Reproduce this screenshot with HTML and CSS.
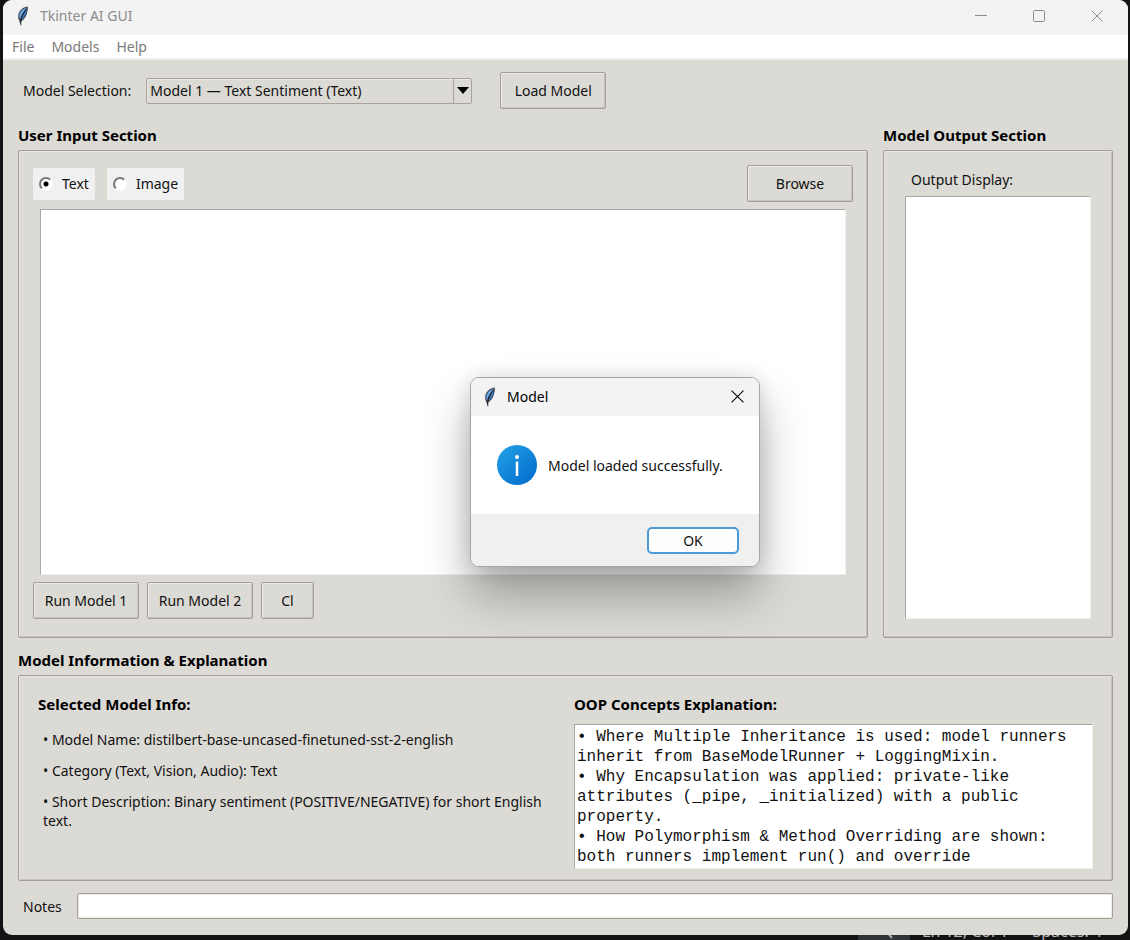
FILE: index.html
```html
<!DOCTYPE html>
<html lang="en">
<head>
<meta charset="utf-8">
<title>Tkinter AI GUI</title>
<link rel="stylesheet" href="styles.css">
</head>
<body class="desktop">
<svg class="defs" aria-hidden="true">
  <defs>
    <symbol id="feather" viewBox="0 0 12 20">
      <path d="M10.6 .6C7 .9 3.2 3.6 1.8 7.4.9 9.8.9 12.8 2.2 14.6L3.6 19.4 4.4 19.2 4.2 15.4C7.2 13.6 9.4 10.4 10 7 10.4 4.8 11.4 2.6 10.6.6Z" fill="#3a424d"/>
      <path d="M9.8 1.6C6.6 2.6 3.6 5.200 2.600 8.400 2.200 10 2.200 12 3 13.400 4 9.600 6 6 9.800 1.600Z" fill="#6fabeb"/>
      <path d="M9.900 2.800C7.200 7 5.200 10.400 4.200 14 6.600 12.400 8.600 9.600 9.200 6.400Z" fill="#3a74bf"/>
      <path d="M9 3.400C6.200 7 4.200 10.800 3.500 17" fill="none" stroke="#111820" stroke-width=".8"/>
      <path d="M1 9.500C1.300 6.500 3.200 3.600 6 2" fill="none" stroke="#98a2ae" stroke-width=".8"/>
    </symbol>
    <symbol id="cross" viewBox="0 0 12 12">
      <path d="M.5.5 11.5 11.5M11.5.5.5 11.5" fill="none" stroke="currentColor"/>
    </symbol>
  </defs>
</svg>

<footer class="statusbar">
  <span class="statusbar-tile"><svg width="20" height="20" viewBox="0 0 20 20"><circle cx="8" cy="7" r="6" fill="none" stroke="#a5a8ac" stroke-width="2"/><path d="M12 11 18 18" stroke="#a5a8ac" stroke-width="2"/></svg></span>
  <span>Ln 12, Col 1</span>
  <span>Spaces: 4</span>
</footer>

<main class="window">
  <header class="titlebar">
    <svg class="feather"><use href="#feather"/></svg>
    <span class="title">Tkinter AI GUI</span>
    <div class="window-controls">
      <button class="control" aria-label="Minimize"><svg width="12" height="12" viewBox="0 0 12 12"><path d="M0 5.500H12" stroke="currentColor"/></svg></button>
      <button class="control" aria-label="Maximize"><svg width="12" height="12" viewBox="0 0 12 12"><rect x=".5" y=".5" width="11" height="11" rx="1" fill="none" stroke="currentColor"/></svg></button>
      <button class="control" aria-label="Close"><svg width="12" height="12"><use href="#cross"/></svg></button>
    </div>
  </header>

  <nav class="menubar">
    <button class="menu">File</button>
    <button class="menu">Models</button>
    <button class="menu">Help</button>
  </nav>

  <div class="content">
    <div class="toolbar">
      <label for="model">Model Selection:</label>
      <div class="combo">
        <select id="model" class="combo-field">
          <option>Model 1 — Text Sentiment (Text)</option>
        </select>
        <span class="combo-arrow"><svg width="12" height="7" viewBox="0 0 12 7"><path d="M0 0H12L6 7Z" fill="#000"/></svg></span>
      </div>
      <button class="btn">Load Model</button>
    </div>

    <div class="columns">
      <section class="section">
        <h2 class="heading">User Input Section</h2>
        <div class="panel input-panel">
          <div class="row">
            <label class="choice"><input type="radio" class="radio" name="kind" checked>Text</label>
            <label class="choice"><input type="radio" class="radio" name="kind">Image</label>
            <button class="btn browse">Browse</button>
          </div>
          <textarea class="field input-field" aria-label="User input"></textarea>
          <div class="row run-row">
            <button class="btn">Run Model 1</button>
            <button class="btn">Run Model 2</button>
            <button class="btn clear">Cl</button>
          </div>
        </div>
      </section>
      <section class="section">
        <h2 class="heading">Model Output Section</h2>
        <div class="panel output-panel">
          <label class="output-label" for="output">Output Display:</label>
          <textarea class="field output-field" id="output"></textarea>
        </div>
      </section>
    </div>

    <section>
      <h2 class="heading">Model Information &amp; Explanation</h2>
      <div class="panel info-panel">
        <div>
          <h3 class="heading subheading">Selected Model Info:</h3>
          <div class="facts">
            <p class="fact">• Model Name: distilbert-base-uncased-finetuned-sst-2-english</p>
            <p class="fact">• Category (Text, Vision, Audio): Text</p>
            <p class="fact">• Short Description: Binary sentiment (POSITIVE/NEGATIVE) for short English text.</p>
          </div>
        </div>
        <div>
          <h3 class="heading subheading" id="oop">OOP Concepts Explanation:</h3>
          <textarea class="field code-field" rows="7" aria-labelledby="oop" spellcheck="false">• Where Multiple Inheritance is used: model runners
inherit from BaseModelRunner + LoggingMixin.
• Why Encapsulation was applied: private-like
attributes (_pipe, _initialized) with a public
property.
• How Polymorphism &amp; Method Overriding are shown:
both runners implement run() and override</textarea>
        </div>
      </div>
    </section>

    <div class="notes">
      <label for="notes">Notes</label>
      <input type="text" id="notes" class="notes-field">
    </div>
  </div>
</main>

<div class="dialog" role="dialog" aria-labelledby="dialog-title">
  <div class="dialog-bar">
    <svg class="feather"><use href="#feather"/></svg>
    <span class="dialog-title" id="dialog-title">Model</span>
    <button class="control dialog-close" aria-label="Close"><svg width="13" height="13"><use href="#cross"/></svg></button>
  </div>
  <div class="dialog-body">
    <svg width="40" height="40" viewBox="0 0 40 40">
      <defs><linearGradient id="info" x1="0" y1="0" x2="1" y2="1"><stop offset="0" stop-color="#22a3e6"/><stop offset="1" stop-color="#0268cc"/></linearGradient></defs>
      <circle cx="20" cy="20" r="20" fill="url(#info)"/>
      <circle cx="20" cy="12" r="2" fill="#fff"/>
      <path d="M20 16.500V31" stroke="#fff" stroke-width="2.500"/>
    </svg>
    <span>Model loaded successfully.</span>
  </div>
  <div class="dialog-foot"><button class="ok">OK</button></div>
</div>
</body>
</html>
```
FILE: styles.css
```css
* { box-sizing: border-box; }

.desktop {
  margin: 0;
  min-height: 100vh;
  display: flex;
  padding: 0 2px 5px 3px;
  position: relative;
  overflow: hidden;
  background: #131313;
  color: #111;
  font: 14px/19px "Noto Sans", "Open Sans", sans-serif;
}

.defs { position: absolute; width: 0; height: 0; }

button, select, input, textarea { font: inherit; color: inherit; margin: 0; }

.statusbar {
  position: absolute;
  right: 28px;
  bottom: 0;
  display: flex;
  gap: 24px;
  align-items: flex-end;
  color: #b5b8bc;
  font-size: 16px;
  line-height: 18px;
  white-space: nowrap;
}
.statusbar-tile {
  display: flex;
  justify-content: center;
  width: 52px;
  margin-right: -12px;
  background: #303439;
}

.window {
  position: relative;
  flex: 1;
  min-width: 0;
  display: flex;
  flex-direction: column;
  background: #dcdad5;
  border-radius: 9px;
  overflow: hidden;
}

.titlebar {
  display: flex;
  align-items: center;
  height: 35px;
  padding: 0 2px 4px 14px;
  background: #f3f3f3;
  color: #8c8c8c;
}
.feather { width: 12px; height: 20px; }
.title { margin-left: 11px; }
.window-controls { margin-left: auto; display: flex; }
.control {
  display: flex;
  align-items: center;
  justify-content: center;
  width: 58px;
  height: 31px;
  padding: 0;
  border: 0;
  background: none;
}

.menubar {
  display: flex;
  gap: 17px;
  height: 25px;
  padding: 0 9px;
  background: #fff;
  border-bottom: 2px solid #f0f0f0;
  color: #7a7a7a;
}
.menu { padding: 0; border: 0; background: none; }

.content {
  flex: 1;
  display: flex;
  flex-direction: column;
  padding: 12px 15px 16px;
}

.toolbar { display: flex; align-items: center; padding-left: 5px; }
.combo {
  position: relative;
  width: 326px;
  margin: 0 28px 0 15px;
}
.combo-field {
  display: block;
  width: 100%;
  height: 26px;
  padding: 0 20px 0 3px;
  appearance: none;
  background: #dcdad5;
  border: 1px solid #a8a39c;
  border-radius: 2px;
  box-shadow: inset 1px 1px #eae8e4;
}
.combo-arrow {
  position: absolute;
  top: 1px;
  right: 1px;
  bottom: 1px;
  width: 18px;
  display: flex;
  align-items: center;
  justify-content: center;
  border-left: 1px solid #a8a39c;
  pointer-events: none;
}

.btn {
  height: 37px;
  min-width: 106px;
  padding: 0 10px;
  background: #dcdad5;
  border: 1px solid #a39e97;
  border-radius: 2px;
  box-shadow: inset 1px 1px #eeebe7, inset -1px -1px #c6c3bd;
}

.columns {
  flex: 1;
  display: grid;
  grid-template-columns: minmax(0, 1fr) 230px;
  gap: 15px;
  margin: 16px 0 12px;
}
.section { display: flex; flex-direction: column; }
.heading {
  margin: 0 0 5px;
  font-size: 15px;
  line-height: 20px;
  font-weight: 700;
  color: #000;
}
.panel {
  border: 1px solid #a39e97;
  border-radius: 2px;
  box-shadow: inset 1px 1px #e8e5e1, inset -1px -1px #c6c3bd;
}
.input-panel {
  flex: 1;
  display: flex;
  flex-direction: column;
  padding: 14px 14px 18px;
}
.row { display: flex; align-items: center; gap: 12px; }
.run-row { gap: 8px; }
.browse { margin-left: auto; }
.clear { min-width: 53px; }

.choice {
  display: flex;
  align-items: center;
  gap: 9px;
  height: 32px;
  padding: 0 6px;
  background: #f0f0f0;
}
.radio {
  appearance: none;
  width: 14px;
  height: 14px;
  border: 2px solid #fff;
  border-top-color: #777;
  border-left-color: #777;
  border-radius: 50%;
  background: #fff;
}
.radio:checked { background: radial-gradient(circle, #000 2px, #fff 3px); }

.field {
  display: block;
  resize: none;
  padding: 1px;
  background: #fff;
  border: 1px solid #f0efed;
  border-top-color: #a9a8a5;
  border-left-color: #a9a8a5;
  border-radius: 0;
}
.input-field { flex: 1; margin: 7px; }
.output-panel {
  flex: 1;
  display: flex;
  flex-direction: column;
  padding: 19px 21px 18px;
}
.output-label { padding: 0 6px 7px; }
.output-field { flex: 1; width: 100%; }

.info-panel {
  display: grid;
  grid-template-columns: repeat(2, minmax(0, 1fr));
  gap: 17px;
  padding: 18px 19px 11px;
}
.subheading { margin-bottom: 10px; }
.facts { padding: 6px 5px 0; }
.fact { margin: 0 0 12px; }
.code-field {
  width: 100%;
  padding: 2px 1px 1px 2px;
  overflow: hidden;
  font: 16px/20px "Liberation Mono", monospace;
}

.notes {
  display: flex;
  align-items: center;
  gap: 15px;
  margin-top: 12px;
  padding-left: 5px;
}
.notes-field {
  flex: 1;
  min-width: 0;
  height: 26px;
  padding: 0 4px;
  background: #fff;
  border: 1px solid #a39e97;
  border-radius: 2px;
  box-shadow: inset 0 0 0 1px #eeebe7;
}

.dialog {
  position: absolute;
  left: 470px;
  top: 377px;
  width: 290px;
  border: 1px solid #a6a6a6;
  border-radius: 9px;
  overflow: hidden;
  background: #fff;
  box-shadow: 0 28px 48px rgba(0, 0, 0, .3), 0 2px 20px rgba(0, 0, 0, .14);
}
.dialog-bar {
  display: flex;
  align-items: center;
  height: 38px;
  padding: 0 1px 1px 13px;
  background: #f3f3f3;
  color: #000;
}
.dialog-title { margin-left: 11px; }
.dialog-close { width: 42px; margin-left: auto; color: #000; }
.dialog-body {
  display: flex;
  align-items: center;
  gap: 11px;
  height: 98px;
  padding-left: 26px;
}
.dialog-foot {
  display: flex;
  justify-content: flex-end;
  padding: 13px 20px 12px;
  background: #f0f0f0;
}
.ok {
  width: 92px;
  height: 27px;
  padding: 0;
  background: #fdfdfd;
  border: 2px solid #4a9ad8;
  border-radius: 5px;
}
```
